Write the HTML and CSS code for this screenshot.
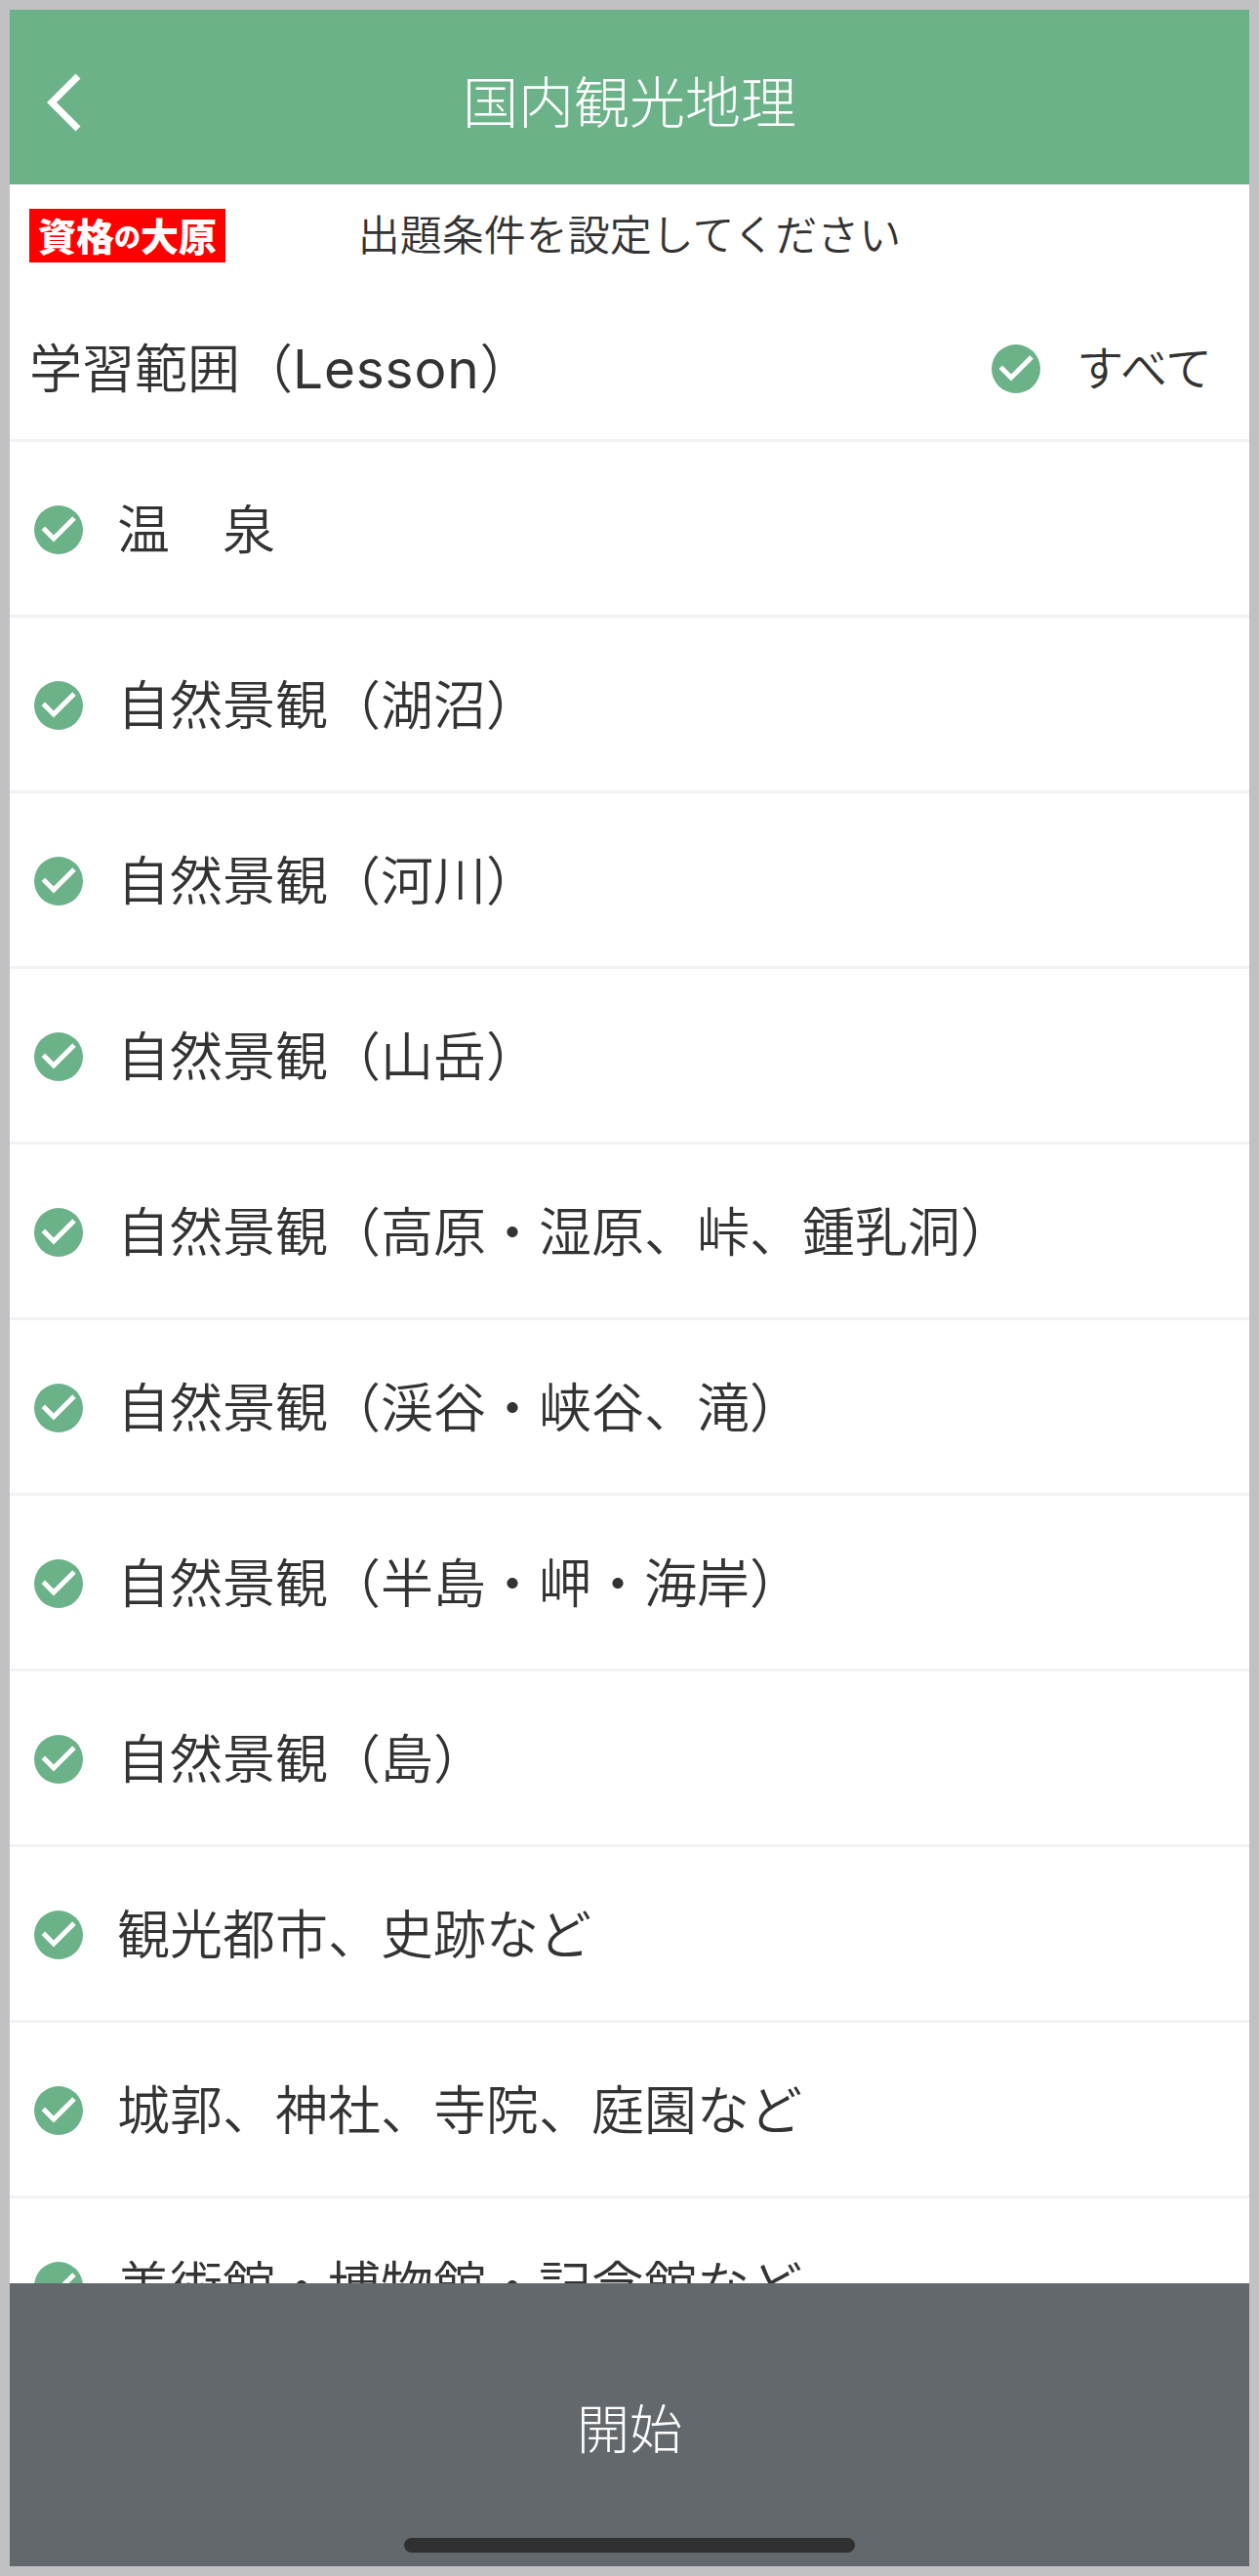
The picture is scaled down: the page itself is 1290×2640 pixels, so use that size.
FILE: index.html
```html
<!DOCTYPE html>
<html lang="ja">
<head>
<meta charset="utf-8">
<title>国内観光地理</title>
<link rel="stylesheet" href="styles.css">
</head>
<body>
<svg class="defs" aria-hidden="true">
  <symbol id="check" viewBox="0 0 50 50">
    <circle cx="25" cy="25" r="25" fill="#6bb288"/>
    <path d="M9.3 23.2 20 33.9 41 13" fill="none" stroke="#fff" stroke-width="5"/>
  </symbol>
</svg>
<div class="screen">
  <header class="bar">
    <svg class="back" viewBox="0 0 36 60"><path d="M32 3 5 30 32 57" fill="none" stroke="#fff" stroke-width="7"/></svg>
    <h1 class="title">国内観光地理</h1>
  </header>
  <div class="intro">
    <div class="logo"><span>資格</span><span class="no">の</span><span>大原</span></div>
    <p class="message">出題条件を設定してください</p>
  </div>
  <div class="scope">
    <h2 class="scope-name">学習範囲（<span class="latin">Lesson</span>）</h2>
    <div class="all"><svg class="check"><use href="#check"/></svg><span class="all-name">すべて</span></div>
  </div>
  <ul class="list">
    <li class="row"><svg class="check"><use href="#check"/></svg><span class="name">温　泉</span></li>
    <li class="row"><svg class="check"><use href="#check"/></svg><span class="name">自然景観（湖沼）</span></li>
    <li class="row"><svg class="check"><use href="#check"/></svg><span class="name">自然景観（河川）</span></li>
    <li class="row"><svg class="check"><use href="#check"/></svg><span class="name">自然景観（山岳）</span></li>
    <li class="row"><svg class="check"><use href="#check"/></svg><span class="name">自然景観（高原・湿原、峠、鍾乳洞）</span></li>
    <li class="row"><svg class="check"><use href="#check"/></svg><span class="name">自然景観（渓谷・峡谷、滝）</span></li>
    <li class="row"><svg class="check"><use href="#check"/></svg><span class="name">自然景観（半島・岬・海岸）</span></li>
    <li class="row"><svg class="check"><use href="#check"/></svg><span class="name">自然景観（島）</span></li>
    <li class="row"><svg class="check"><use href="#check"/></svg><span class="name">観光都市、史跡など</span></li>
    <li class="row"><svg class="check"><use href="#check"/></svg><span class="name">城郭、神社、寺院、庭園など</span></li>
    <li class="row"><svg class="check"><use href="#check"/></svg><span class="name">美術館・博物館・記念館など</span></li>
  </ul>
  <footer class="start">
    <span>開始</span>
    <div class="home"></div>
  </footer>
</div>
</body>
</html>
```
FILE: styles.css
```css
* { box-sizing: border-box; margin: 0; padding: 0; }
body {
  background: #c1c0c2;
  color: #333;
  font-family: "Noto Sans CJK JP", sans-serif;
  font-weight: 350;
}
.defs { position: absolute; width: 0; height: 0; }
.screen {
  display: flex;
  flex-direction: column;
  width: 1290px;
  height: 2640px;
  border: 10px solid #c1c0c2;
  background: #fff;
  overflow: hidden;
}
.bar {
  display: grid;
  grid-template-columns: 1fr auto 1fr;
  align-items: center;
  flex: none;
  height: 179px;
  padding: 11px 38px 0;
  background: #6bb288;
  color: #fff;
}
.back { width: 36px; height: 60px; }
.title { padding-bottom: 9px; font-size: 57px; font-weight: 300; line-height: 80px; }
.intro {
  display: grid;
  grid-template-columns: 1fr auto 1fr;
  align-items: center;
  flex: none;
  height: 105px;
  padding: 0 20px;
}
.logo {
  display: flex;
  align-items: center;
  justify-content: center;
  width: 201px;
  height: 55px;
  padding-bottom: 3px;
  background: #f00;
  color: #fff;
  font-size: 39px;
  font-weight: 900;
  line-height: 52px;
}
.no { padding-top: 4px; font-size: 27px; }
.message { padding-bottom: 7px; font-size: 43px; line-height: 60px; }
.scope {
  display: flex;
  align-items: center;
  justify-content: space-between;
  flex: none;
  height: 156px;
  padding: 12px 38px 0 20px;
}
.scope-name { padding-bottom: 3px; font-size: 54px; font-weight: 350; line-height: 80px; }
.latin { font-family: Inter, sans-serif; font-size: 55px; font-weight: 400; letter-spacing: 0.8px; }
.all { display: flex; align-items: center; gap: 37px; }
.all-name { padding-bottom: 8px; font-size: 48px; line-height: 60px; }
.check { flex: none; width: 50px; height: 50px; }
.list { flex: 1; min-height: 0; overflow: hidden; list-style: none; }
.row {
  display: flex;
  align-items: center;
  gap: 35px;
  height: 180px;
  padding: 3px 25px 0;
  border-top: 3px solid #f1f2f4;
  font-size: 54px;
  line-height: 80px;
  white-space: nowrap;
}
.name { padding-bottom: 6px; }
.start {
  display: flex;
  flex-direction: column;
  align-items: center;
  justify-content: space-between;
  flex: none;
  height: 290px;
  padding: 107px 0 14px;
  background: #63686c;
  color: #fff;
  font-size: 54px;
  font-weight: 300;
  line-height: 80px;
}
.home { width: 462px; height: 15px; border-radius: 8px; background: #303030; }
```
